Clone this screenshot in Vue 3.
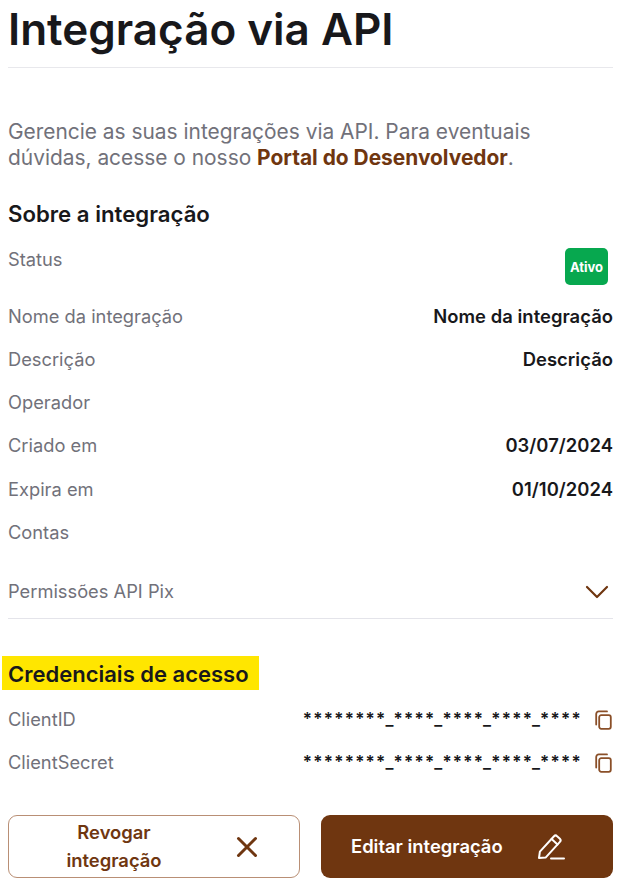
<script setup>
const rows = [
  { label: 'Nome da integração', value: 'Nome da integração' },
  { label: 'Descrição', value: 'Descrição' },
  { label: 'Operador', value: '' },
  { label: 'Criado em', value: '03/07/2024' },
  { label: 'Expira em', value: '01/10/2024' },
  { label: 'Contas', value: '' },
]
const creds = ['ClientID', 'ClientSecret']
</script>

<template>
  <main class="page">
    <h1 class="title">Integração via API</h1>
    <p class="intro">
      Gerencie as suas integrações via API. Para eventuais dúvidas, acesse o nosso
      <a class="link">Portal do Desenvolvedor</a>.
    </p>

    <h2 class="section">Sobre a integração</h2>
    <div class="status">
      <span class="label">Status</span>
      <span class="badge">Ativo</span>
    </div>
    <div v-for="r in rows" :key="r.label" class="row">
      <span class="label">{{ r.label }}</span>
      <strong class="value">{{ r.value }}</strong>
    </div>

    <div class="perm">
      <span class="label">Permissões API Pix</span>
      <svg class="chev" width="24" height="14" viewBox="0 0 24 14" fill="none">
        <path d="M2 2l10 10L22 2" stroke="#6f3610" stroke-width="2.2" stroke-linecap="round" stroke-linejoin="round" />
      </svg>
    </div>

    <h2 class="section highlight">Credenciais de acesso</h2>
    <div v-for="c in creds" :key="c" class="cred">
      <span class="label">{{ c }}</span>
      <span class="secret">
        <span class="mask">********_****_****_****_****</span>
        <svg class="copy" width="17" height="20" viewBox="0 0 17 20" fill="none" stroke="#8a4f28" stroke-width="1.8" stroke-linecap="round" stroke-linejoin="round">
          <rect x="4.2" y="5.2" width="11.6" height="13.6" rx="2" />
          <path d="M1.2 14.5V4a2.6 2.6 0 0 1 2.6-2.6h8.2" />
        </svg>
      </span>
    </div>

    <div class="actions">
      <button class="btn outline">
        <span class="btn-text">Revogar integração</span>
        <svg width="22" height="22" viewBox="0 0 22 22" fill="none" stroke="#6f3610" stroke-width="3" stroke-linecap="round">
          <path d="M2.5 2.5l17 17M19.5 2.5l-17 17" />
        </svg>
      </button>
      <button class="btn solid">
        <span class="btn-text">Editar integração</span>
        <svg width="28" height="27" viewBox="0 0 28 27" fill="none" stroke="#fff" stroke-width="2" stroke-linecap="round" stroke-linejoin="round">
          <path d="M2 25l.9-6.4L17 3.2a2.2 2.2 0 0 1 3.1 0l2.8 2.6a2.2 2.2 0 0 1 0 3.1L8.6 24.6z" />
          <path d="M14.6 6l5.9 5.6M14 25.5h13" />
        </svg>
      </button>
    </div>
  </main>
</template>

<style scoped>
.page {
  box-sizing: border-box;
  width: 636px;
  height: 889px;
  padding: 0 23px 0 8px;
  overflow: hidden;
  background: #fff;
  color: #18181b;
  font-family: Inter, "Noto Sans", sans-serif;
}
.title {
  margin: 0;
  height: 67px;
  border-bottom: 1px solid #e8e8ec;
  font-size: 44px;
  line-height: 58px;
  font-weight: 600;
}
.intro {
  max-width: 560px;
  margin: 51px 0 0;
  font-size: 20.9px;
  line-height: 26px;
  color: #71717a;
}
.link {
  color: #6f3610;
  font-weight: 700;
}
.section {
  margin: 28px 0 0;
  font-size: 22.2px;
  line-height: 30px;
  font-weight: 600;
}
.label {
  font-size: 18.3px;
  line-height: 26px;
  color: #71717a;
}
.status {
  display: flex;
  justify-content: space-between;
  align-items: flex-start;
  height: 48.4px;
  margin-top: 17px;
  padding-right: 5px;
}
.badge {
  display: flex;
  align-items: center;
  justify-content: center;
  width: 43px;
  height: 37px;
  margin-top: 2px;
  border-radius: 5px;
  background: #07a84f;
  color: #fff;
  font-size: 13px;
  font-weight: 700;
}
.row {
  display: flex;
  justify-content: space-between;
  align-items: center;
  height: 43.15px;
}
.value {
  font-size: 18.4px;
  font-weight: 600;
  letter-spacing: 0.04px;
}
.perm {
  display: flex;
  justify-content: space-between;
  align-items: center;
  height: 43px;
  margin-top: 17.2px;
  padding-right: 4px;
  padding-bottom: 5px;
  border-bottom: 1px solid #e4e4ea;
}
.perm .label {
  margin-bottom: 2px;
}
.highlight {
  display: table;
  margin: 36.6px 0 0 -6px;
  padding: 3px 10px 1px 6px;
  font-size: 22px;
  background: #ffe600;
}
.cred {
  display: flex;
  justify-content: space-between;
  align-items: center;
  height: 43px;
}
.cred .label,
.mask {
  margin-bottom: 2px;
}
.highlight + .cred {
  margin-top: 8px;
}
.secret {
  display: flex;
  align-items: center;
  gap: 13px;
}
.copy {
  margin-right: 1px;
}
.mask {
  font-size: 17px;
  font-weight: 600;
  letter-spacing: 1.3px;
}
.actions {
  display: grid;
  grid-template-columns: 292px 292px;
  justify-content: space-between;
  margin-top: 31px;
}
.btn {
  display: flex;
  align-items: center;
  box-sizing: border-box;
  height: 63px;
  border-radius: 9px;
  font-family: inherit;
  font-size: 18.4px;
  line-height: 28px;
  font-weight: 600;
}
.btn-text {
  margin-bottom: 2px;
}
.outline {
  justify-content: space-between;
  padding: 0 41px 0 40px;
  border: 1px solid #b98f75;
  background: #fff;
  color: #6f3610;
}
.outline .btn-text {
  width: 130px;
  text-align: center;
}
.solid {
  justify-content: flex-start;
  gap: 34px;
  padding: 0 0 0 30px;
  border: 0;
  background: #6f3610;
  color: #fff;
}
</style>
